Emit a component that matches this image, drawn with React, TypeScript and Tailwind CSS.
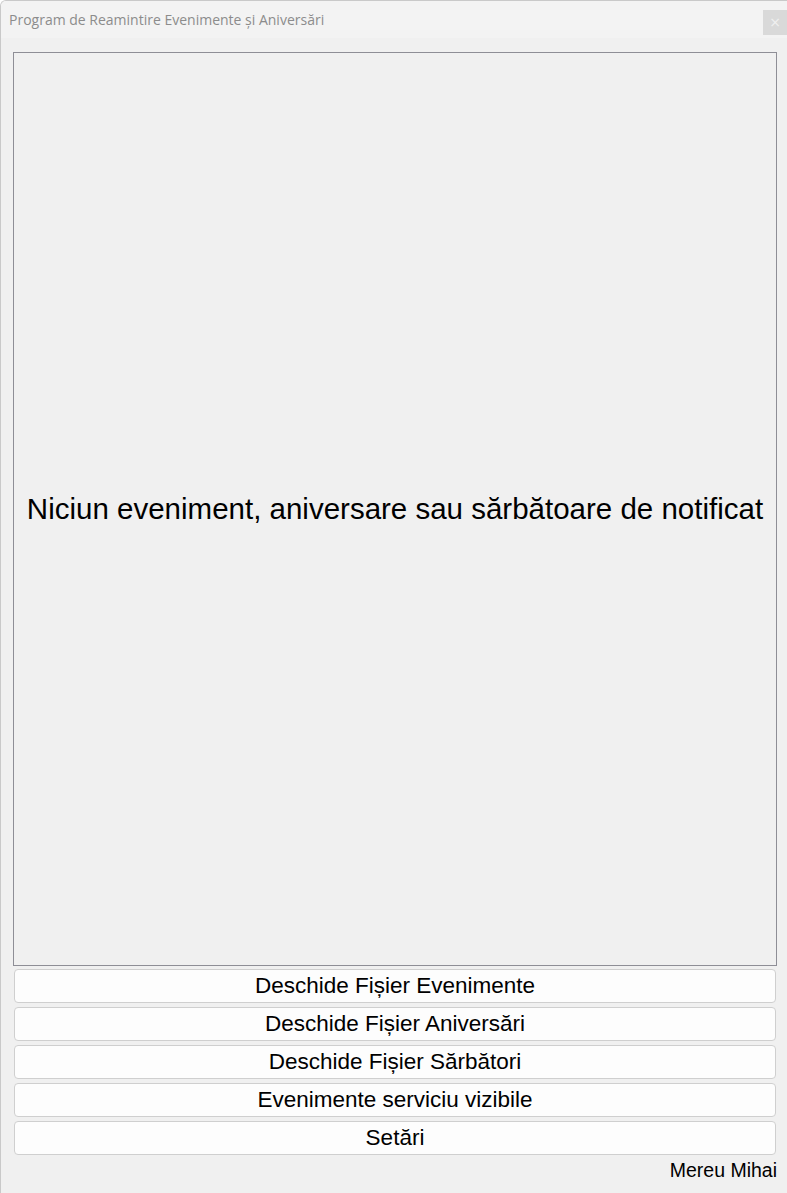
import React from "react";

const buttons = [
  "Deschide Fișier Evenimente",
  "Deschide Fișier Aniversări",
  "Deschide Fișier Sărbători",
  "Evenimente serviciu vizibile",
  "Setări",
];

export default function App() {
  return (
    <div className="w-[787px] h-[1193px] bg-[#f0f0f0] flex flex-col border-l border-t border-[#c9c9c9] rounded-tl-[6px] overflow-hidden">
      <div className="h-[37px] bg-[#f3f3f3] flex items-start justify-between shrink-0">
        <div
          className="pl-[8px] pt-[9px] text-[14px] leading-[20px] text-[#8c8c8c]"
          style={{ fontFamily: '"Open Sans", "Noto Sans", sans-serif' }}
        >
          Program de Reamintire Evenimente și Aniversări
        </div>
        <div className="mt-[9px] w-[24px] h-[25px] bg-[#d9d9d9] flex items-center justify-center text-[#f0f0f0] text-[14px]" style={{ fontFamily: '"DejaVu Sans", sans-serif' }}>
          ×
        </div>
      </div>
      <div
        className="flex-1 flex flex-col pl-[12px] pr-[10px] pt-[14px]"
        style={{ fontFamily: '"Liberation Sans", Arial, sans-serif' }}
      >
        <div className="h-[914px] border border-[#8e8e96] bg-[#f0f0f0] flex items-center justify-center">
          <span className="text-[29.5px] text-black leading-none whitespace-nowrap">
            Niciun eveniment, aniversare sau sărbătoare de notificat
          </span>
        </div>
        <div className="flex flex-col gap-[4px] mt-[3px] px-[1px]">
          {buttons.map((b) => (
            <div
              key={b}
              className="h-[34px] rounded-[4px] border border-[#cfcfcf] bg-[#fdfdfd] flex items-center justify-center text-[22.5px] leading-none text-black"
            >
              {b}
            </div>
          ))}
        </div>
        <div className="flex justify-end mt-[4px] text-[19.5px] leading-[22px] text-black">
          Mereu Mihai
        </div>
      </div>
    </div>
  );
}
